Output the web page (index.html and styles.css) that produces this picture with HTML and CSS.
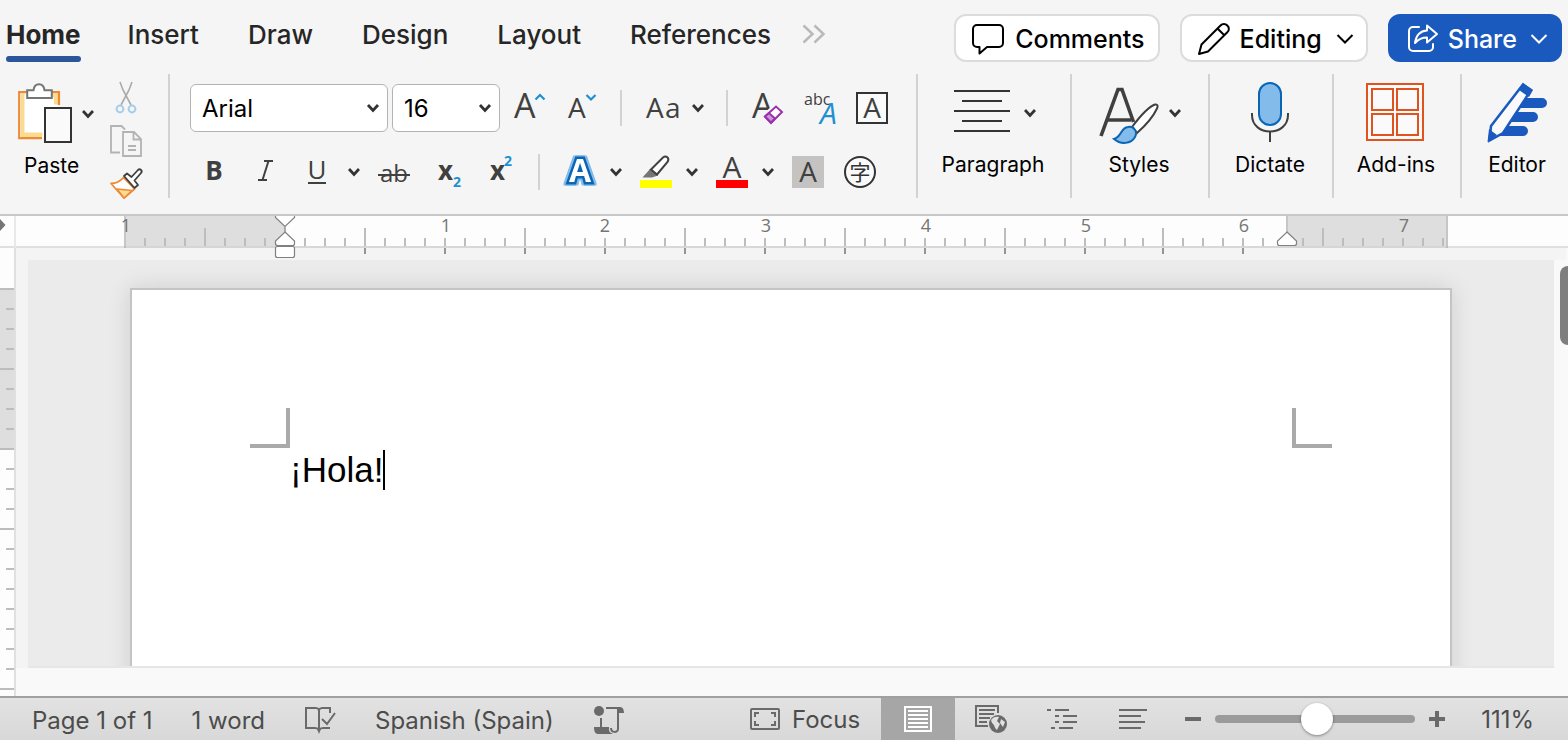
FILE: index.html
```html
<!DOCTYPE html>
<html lang="en">
<head>
<meta charset="utf-8">
<title>Document</title>
<link rel="stylesheet" href="styles.css">
</head>
<body>
<svg class="defs" aria-hidden="true">
  <symbol id="chev" viewBox="0 0 12 10"><path d="M1 2l5 5.500 5-5.500" fill="none" stroke="currentColor" stroke-width="2.800"/></symbol>
  <symbol id="chev-thin" viewBox="0 0 18 12"><path d="M1.500 2L9 9.500 16.500 2" fill="none" stroke="currentColor" stroke-width="2"/></symbol>
</svg>

<header class="top">
  <nav class="tabs">
    <a class="tab active" href="#home">Home</a>
    <a class="tab" href="#insert">Insert</a>
    <a class="tab" href="#draw">Draw</a>
    <a class="tab" href="#design">Design</a>
    <a class="tab" href="#layout">Layout</a>
    <a class="tab" href="#references">References</a>
    <button class="plain more" aria-label="More tabs"><svg width="24" height="20" viewBox="0 0 24 20" fill="none" stroke="#b9b9b9" stroke-width="2.500"><path d="M1.500 1.500L10.500 10l-9 8.500M12.500 1.500L21.500 10l-9 8.500"/></svg></button>
  </nav>
  <div class="actions">
    <button class="pill"><svg width="32" height="32" viewBox="0 0 32 32" fill="none" stroke="#000" stroke-width="2" stroke-linejoin="round"><path d="M5 2h22a4 4 0 0 1 4 4v14a4 4 0 0 1-4 4H15l-7.500 6.500V24H5a4 4 0 0 1-4-4V6a4 4 0 0 1 4-4z"/></svg>Comments</button>
    <button class="pill editing"><svg width="32" height="32" viewBox="0 0 32 32" fill="none" stroke="#000" stroke-width="2" stroke-linejoin="round"><path d="M1 31l2.500-9.500L22.500 2.500a4.500 4.500 0 0 1 6.800 0 4.500 4.500 0 0 1 0 6.800L10 28.500zM19.500 5.500l6.800 6.800"/></svg>Editing<svg class="end" width="18" height="12"><use href="#chev-thin"/></svg></button>
    <button class="pill share"><svg width="32" height="30" viewBox="0 0 32 30" fill="none" stroke="#fff" stroke-width="2" stroke-linejoin="round"><path d="M12 3H6a4 4 0 0 0-4 4v16a4 4 0 0 0 4 4h16a4 4 0 0 0 4-4v-3" stroke-linecap="round"/><path d="M20 1.500l10 8.500-10 8.500v-5c-5 0-8.500 1.500-12 5.500 1-7 4.500-12 12-12.500z"/></svg>Share<svg class="end" width="18" height="12"><use href="#chev-thin"/></svg></button>
  </div>
</header>

<section class="ribbon" aria-label="Home">
  <div class="group paste-group">
    <button class="plain big">
      <span class="art">
        <svg width="56" height="62" viewBox="0 0 56 62"><path d="M42 22V10H1v46h24" fill="#fff" stroke="none"/><path d="M3.500 11v42.500H24V50H6V11zM33 11h7v10h-3.500v-7H33z" fill="#fadb8f" stroke="#fadb8f"/><path d="M24 55.200H1.200V9.200H41V22" fill="none" stroke="#ee8a33" stroke-width="2.200"/><path d="M9.200 15V7.200h6.300C16 3 18 1.200 21 1.200s5 1.800 5.500 6h7.300V15z" fill="#fff" stroke="#757575" stroke-width="2"/><rect x="27" y="25" width="26" height="34" fill="#fafafa" stroke="#333" stroke-width="2"/></svg>
        <svg class="chev" width="12" height="10"><use href="#chev"/></svg>
      </span>
      <span>Paste</span>
    </button>
    <div class="clip">
      <button class="plain" aria-label="Cut"><svg width="32" height="34" viewBox="0 0 32 34" fill="none"><path d="M10 1l3 8 8 15M22 1l-3 8-8 15" stroke="#aaa" stroke-width="1.600"/><circle cx="10" cy="28" r="3.400" stroke="#a3cdea" stroke-width="2"/><circle cx="22" cy="28" r="3.400" stroke="#a3cdea" stroke-width="2"/></svg></button>
      <button class="plain" aria-label="Copy"><svg width="32" height="34" viewBox="0 0 32 34" fill="none" stroke="#b3b3b3" stroke-width="1.800"><path d="M10 28.500H1V2h10.500L15 5.500M13 8h11l7 7v17H13zM23.500 8v7.500H31M18 22h8M18 26h8"/></svg></button>
      <button class="plain" aria-label="Format painter"><svg width="32" height="34" viewBox="0 0 32 34" stroke-linejoin="round" stroke-width="1.800"><path d="M1 16.500c6 0 9-2 12.500-6L24.500 22 14 31z" fill="#fff" stroke="#ee8a33"/><path d="M7 22l15 1.500-8 7.500z" fill="#fadb8f" stroke="#ee8a33" stroke-width="1.500"/><path d="M14 9l3-2.500 4.500 3.500L28 3a2 2 0 0 1 3 3l-6.500 7.500L28 18l-3.500 3z" fill="#fff" stroke="#404040"/></svg></button>
    </div>
  </div>

  <div class="group font-group">
    <div class="row row-a">
      <label class="combo"><select aria-label="Font"><option>Arial</option></select><svg class="chev" width="14" height="10"><use href="#chev"/></svg></label>
      <label class="combo size"><select aria-label="Font size"><option>16</option></select><svg class="chev" width="14" height="10"><use href="#chev"/></svg></label>
      <button class="plain" aria-label="Grow font"><svg width="32" height="36" viewBox="0 0 32 36"><text x="0" y="28" class="g s34">A</text><path d="M21.500 9.500l4.500-4.500 4.500 4.500" fill="none" stroke="#1e90d2" stroke-width="2.200"/></svg></button>
      <button class="plain" aria-label="Shrink font"><svg width="32" height="36" viewBox="0 0 32 36"><text x="2" y="28" class="g s28">A</text><path d="M20.500 5l4.500 4.500L29.500 5" fill="none" stroke="#1e90d2" stroke-width="2.200"/></svg></button>
      <i class="bar"></i>
      <button class="plain" aria-label="Change case"><svg width="36" height="36" viewBox="0 0 36 36"><text x="0" y="28" class="g s28">A</text><text x="19" y="28" class="g s28">a</text></svg></button>
      <button class="plain arrow" aria-label="Change case options"><svg class="chev" width="12" height="10"><use href="#chev"/></svg></button>
      <i class="bar"></i>
      <button class="plain" aria-label="Clear formatting"><svg width="32" height="36" viewBox="0 0 32 36"><text x="0" y="28" class="g s34">A</text><path d="M12 26L24 15l7 6.500-12 12z" fill="#f5f5f5" stroke="#f5f5f5" stroke-width="4"/><path d="M13 26.500L24 16.500l6 5.500-11 11z" fill="#fff" stroke="#9b2fae" stroke-width="2"/><path d="M13 26.500l4-3.500 6 5.500-4 4z" fill="#c99ad6" stroke="#9b2fae" stroke-width="2"/></svg></button>
      <button class="plain" aria-label="Phonetic guide"><svg width="36" height="36" viewBox="0 0 36 36"><text x="0" y="15" class="g s16">abc</text><text x="16" y="34" class="g s30 blue it">A</text></svg></button>
      <button class="plain" aria-label="Character border"><svg width="32" height="36" viewBox="0 0 32 36"><rect x="1" y="3" width="30" height="30" fill="#fafafa" stroke="#333" stroke-width="2"/><text x="16" y="28" class="g s28 mid">A</text></svg></button>
    </div>
    <div class="row row-b">
      <button class="plain" aria-label="Bold"><svg width="32" height="36" viewBox="0 0 32 36"><text x="16" y="26" class="g s26 mid bold">B</text></svg></button>
      <button class="plain" aria-label="Italic"><svg width="32" height="36" viewBox="0 0 32 36"><path d="M14 7h9M8 26h9M18.500 7l-6 19" fill="none" stroke="#404040" stroke-width="2"/></svg></button>
      <button class="plain" aria-label="Underline"><svg width="32" height="36" viewBox="0 0 32 36"><text x="17" y="25" class="g s26 mid">U</text><path d="M8 29h18" stroke="#404040" stroke-width="2"/></svg></button>
      <button class="plain arrow" aria-label="Underline options"><svg class="chev" width="12" height="10"><use href="#chev"/></svg></button>
      <button class="plain" aria-label="Strikethrough"><svg width="32" height="36" viewBox="0 0 32 36"><text x="16" y="28" class="g s24 mid">ab</text><path d="M0 21h32" stroke="#404040" stroke-width="2"/></svg></button>
      <button class="plain" aria-label="Subscript"><svg width="32" height="36" viewBox="0 0 32 36"><text x="4" y="26" class="g s26 bold">x</text><text x="19" y="33" class="g s14 blue bold">2</text></svg></button>
      <button class="plain" aria-label="Superscript"><svg width="32" height="36" viewBox="0 0 32 36"><text x="4" y="26" class="g s26 bold">x</text><text x="18" y="12" class="g s14 blue bold">2</text></svg></button>
      <i class="bar"></i>
      <button class="plain" aria-label="Text effects"><svg width="32" height="36" viewBox="0 0 32 36"><text x="16" y="28" class="fx">A</text></svg></button>
      <button class="plain arrow" aria-label="Text effect options"><svg class="chev" width="12" height="10"><use href="#chev"/></svg></button>
      <button class="plain" aria-label="Highlight"><svg width="32" height="36" viewBox="0 0 32 36"><path d="M0 26h32v8H0z" fill="#ff0"/><path d="M2.500 23.500L10 15l8 6.500-6 2z" fill="#757575"/><path d="M11 15.500L23 3.500c3-2.500 7 .5 4.500 4.500L17 20.500z" fill="#fff" stroke="#404040" stroke-width="2"/></svg></button>
      <button class="plain arrow" aria-label="Highlight options"><svg class="chev" width="12" height="10"><use href="#chev"/></svg></button>
      <button class="plain" aria-label="Font color"><svg width="32" height="36" viewBox="0 0 32 36"><path d="M0 26h32v8H0z" fill="red"/><text x="16" y="24" class="g s30 mid">A</text></svg></button>
      <button class="plain arrow" aria-label="Font color options"><svg class="chev" width="12" height="10"><use href="#chev"/></svg></button>
      <button class="plain" aria-label="Character shading"><svg width="32" height="36" viewBox="0 0 32 36"><path d="M0 2h32v32H0z" fill="#c4c3c2"/><text x="16" y="28" class="g s28 mid">A</text></svg></button>
      <button class="plain" aria-label="Enclose characters"><svg width="32" height="36" viewBox="0 0 32 36"><circle cx="16" cy="18" r="15" fill="#fafafa" stroke="#333" stroke-width="2"/><text x="16" y="26" class="cjk">字</text></svg></button>
    </div>
  </div>

  <div class="group paragraph">
    <button class="plain big"><span class="art"><svg width="56" height="62" viewBox="0 0 56 62"><path d="M0 9h56M8 19h40M0 29h56M8 39h40M0 49h56" stroke="#333" stroke-width="2"/></svg><svg class="chev" width="12" height="10"><use href="#chev"/></svg></span><span>Paragraph</span></button>
  </div>
  <div class="group styles">
    <button class="plain big"><span class="art"><svg width="60" height="62" viewBox="0 0 60 62"><path d="M2 54L19 7.500h4L34.500 40M8 38h24" fill="none" stroke="#404040" stroke-width="3.600"/><path d="M33 45C42 33 49 25 56 22.500c3-.5 3 2 2 4C54 35 46 44 38 51z" fill="#fff" stroke="#404040" stroke-width="2"/><path d="M15 57c8-2 6-11 14-12 6-1 10 5 7 10-4 7-14 8-21 2z" fill="#83bceb" stroke="#0a66b5" stroke-width="2"/></svg><svg class="chev" width="12" height="10"><use href="#chev"/></svg></span><span>Styles</span></button>
  </div>
  <div class="group dictate">
    <button class="plain big"><span class="art"><svg width="40" height="62" viewBox="0 0 40 62"><rect x="9" y="1" width="22" height="42" rx="11" fill="#83bceb" stroke="#0a66b5" stroke-width="2"/><path d="M2 31v2c0 22 36 22 36 0v-2M20 49v11" fill="none" stroke="#404040" stroke-width="2"/></svg></span><span>Dictate</span></button>
  </div>
  <div class="group addins">
    <button class="plain big"><span class="art"><svg width="60" height="62" viewBox="0 0 60 62" fill="#fafafa" stroke="#e0531f" stroke-width="2"><rect x="1" y="2" width="56" height="56"/><rect x="6" y="7" width="21" height="21"/><rect x="31" y="7" width="21" height="21"/><rect x="6" y="32" width="21" height="21"/><rect x="31" y="32" width="21" height="21"/></svg></span><span>Add-ins</span></button>
  </div>
  <div class="group editor">
    <button class="plain big"><span class="art"><svg width="62" height="62" viewBox="0 0 62 62"><path d="M37 16h19a5 5 0 0 1 0 10H28zM30 30h17a5 5 0 0 1 0 10H22zM20 44h17a5 5 0 0 1 0 10H9z" fill="#1a5abf"/><path d="M37 2.500l8 5.500-28 43L3.500 58.500 5 44z" fill="#fafafa" stroke="#1a5abf" stroke-width="2.500"/><path d="M37 1l10 7-4 7-10-7zM3 47l8 6-9.500 7z" fill="#1a5abf"/></svg></span><span>Editor</span></button>
  </div>
</section>

<div class="hruler" aria-hidden="true">
  <svg class="corner" width="16" height="32" viewBox="0 0 16 32"><path d="M0 3l5.500 6L0 15z" fill="#757575"/><path d="M15 0v32" stroke="#e8e8e8" stroke-width="2"/></svg>
  <svg class="scale" width="1324" height="44" viewBox="124 216 1324 44">
    <path d="M124 216h161v32H124zM1287 216h161v32h-161z" fill="#dedede"/>
    <path d="M125 216v32M1287 216v24M1447 216v32" stroke="#c6c6c6" stroke-width="2"/>
    <path d="M124 247h1324" stroke="#000" stroke-opacity=".04" stroke-width="2"/>
    <path d="M144 242h986" stroke="#bdbdbd" stroke-width="8" stroke-dasharray="2 18"/>
    <path d="M1142 242h303" stroke="#bdbdbd" stroke-width="8" stroke-dasharray="2 18"/>
    <path d="M205 228v18M365 228v18M525 228v18M685 228v18M845 228v18M1005 228v18M1163 228v18M1323 228v18" stroke="#bdbdbd" stroke-width="2"/>
    <path d="M364 251h722" stroke="#949494" stroke-width="6" stroke-dasharray="2 78"/>
    <path d="M1162 251h82" stroke="#949494" stroke-width="6" stroke-dasharray="2 78"/>
    <g class="nums"><text x="126" y="232">1</text><text x="446" y="232">1</text><text x="605" y="232">2</text><text x="766" y="232">3</text><text x="926" y="232">4</text><text x="1086" y="232">5</text><text x="1244" y="232">6</text><text x="1404" y="232">7</text></g>
    <g fill="#fff" stroke="#808080" stroke-width="1.200"><path d="M275.500 216v1.500l9.500 9 9.500-9V216M285 226v6"/><path id="stop" d="M285 232l9.500 9v2.500a2 2 0 0 1-2 2h-15a2 2 0 0 1-2-2V241z"/><use href="#stop" x="1002"/><rect x="275.500" y="246.500" width="19" height="11" rx="2"/></g>
  </svg>
</div>

<main class="work">
  <svg class="vruler" width="16" height="448" viewBox="0 248 16 448" aria-hidden="true">
    <path d="M0 248h14v448H0z" fill="#fdfdfd"/><path d="M0 288h14v160H0z" fill="#dedede"/>
    <path d="M10 308v388" stroke="#bdbdbd" stroke-width="8" stroke-dasharray="2 18"/>
    <path d="M0 289h14M0 369h14M0 449h14M0 529h14M0 689h14" stroke="#bdbdbd" stroke-width="2"/>
    <path d="M15 248v448" stroke="#e0e0e0" stroke-width="2"/>
  </svg>
  <div class="canvas">
    <article class="page">
      <div class="body"><span class="mark left"></span><span class="mark right"></span><p contenteditable="true" role="textbox" aria-label="Document text">¡Hola!</p><span class="caret"></span></div>
    </article>
  </div>
  <div class="scroll"><div class="thumb"></div></div>
</main>

<footer class="status">
  <div class="left-side">
    <span class="pages">Page 1 of 1</span>
    <span class="words">1 word</span>
    <button class="plain" aria-label="Proofing"><svg width="32" height="30" viewBox="0 0 32 30" fill="none" stroke="#6a6a6a" stroke-width="2"><path d="M15 25V5c-1-2-2-2-3-2H2v20h9c2 0 3 0 4 2zM15 5c1-2 2-2 3-2h8v5M15 25c1-2 2-2 4-2h7M18 14l5 5 8-11"/><path d="M13 24h4l-2 5z" fill="#6a6a6a" stroke="none"/></svg></button>
    <button class="plain lang">Spanish (Spain)</button>
    <button class="plain" aria-label="Accessibility"><svg width="32" height="30" viewBox="0 0 32 30"><circle cx="6" cy="6" r="5" fill="#6a6a6a"/><path d="M8 13v10M13 3h12v21c0 4-7 4-7-1" fill="none" stroke="#6a6a6a" stroke-width="2"/><path d="M1 22h15v3c0 2 2 3 4 4H5c-3 0-4-3-4-7zM23 2h4c3 0 4 3 4 6h-5z" fill="#6a6a6a"/></svg></button>
  </div>
  <div class="right-side">
    <button class="plain focus"><svg width="30" height="24" viewBox="0 0 30 24" fill="none" stroke="#6a6a6a" stroke-width="2"><rect x="1" y="2" width="28" height="20" rx="1"/><path d="M5 10V6h4M21 6h4v4M25 14v4h-4M9 18H5v-4"/></svg>Focus</button>
    <button class="view on" aria-label="Print layout"><svg width="28" height="28" viewBox="0 0 28 28"><rect x="1" y="2" width="26" height="24" fill="none" stroke="#fff" stroke-width="2"/><path d="M4 6h20M4 10h20M4 14h20M4 18h20M4 22h20" stroke="#fff" stroke-width="2"/></svg></button>
    <button class="view" aria-label="Web layout"><svg width="32" height="30" viewBox="0 0 32 30"><path d="M23 9V2H1v20h12M4 6h16M4 10h15M4 14h11M4 18h8" fill="none" stroke="#6a6a6a" stroke-width="2"/><circle cx="23" cy="20" r="9" fill="#6a6a6a"/><path d="M16 16c2-3 5-4 8-3l-2 4 3 3-3 6c-3-2-2-5-5-7zM26 15l4 3-2 5-3-4z" fill="#e0e0e0"/></svg></button>
    <button class="view" aria-label="Outline"><svg width="30" height="24" viewBox="0 0 30 24" stroke="#6a6a6a" stroke-width="2"><path d="M0 3h4M8 3h14M8 9h4M16 9h14M8 15h4M16 15h14M4 21h4M12 21h14"/></svg></button>
    <button class="view draft" aria-label="Draft"><svg width="28" height="24" viewBox="0 0 28 24" stroke="#6a6a6a" stroke-width="2"><path d="M0 3h28M0 9h22M0 15h26M0 21h22"/></svg></button>
    <button class="plain" aria-label="Zoom out"><svg width="16" height="16" viewBox="0 0 16 16"><path d="M0 8h16" stroke="#6a6a6a" stroke-width="4"/></svg></button>
    <input type="range" aria-label="Zoom" min="0" max="100" value="51">
    <button class="plain" aria-label="Zoom in"><svg width="16" height="16" viewBox="0 0 16 16"><path d="M0 8h16M8 0v16" stroke="#6a6a6a" stroke-width="4"/></svg></button>
    <span class="percent">111%</span>
  </div>
</footer>
</body>
</html>
```

FILE: styles.css
```css
* { box-sizing: border-box; }
body {
  margin: 0;
  height: 100vh;
  display: flex;
  flex-direction: column;
  overflow: hidden;
  background: #f5f5f5;
  color: #000;
  font-family: Inter, "Liberation Sans", sans-serif;
}
svg { display: block; flex: none; overflow: visible; }
.defs { position: absolute; width: 0; height: 0; }
button, select { font: inherit; color: inherit; }
.plain { border: 0; padding: 0; background: none; white-space: nowrap; }
.chev { color: #333; }

/* Tabs and actions */
.top { flex: none; display: flex; justify-content: space-between; padding: 14px 6px 0; }
.tabs { display: flex; gap: 49px; align-items: flex-start; }
.tab { color: #262626; font-size: 26px; line-height: 42px; height: 48px; font-weight: 500; text-decoration: none; }
.tab.active { font-weight: 700; margin-right: -2px; }
.tab.active::after { content: ""; display: block; height: 6px; border-radius: 3px; background: #2b579a; }
.more { padding-top: 10px; margin-left: -18px; }
.actions { display: flex; gap: 20px; }
.pill {
  display: flex; align-items: center; gap: 11px;
  height: 48px; padding: 2px 13px 0 16px;
  border: 2px solid #dcdcdc; border-radius: 12px;
  background: #fff; font-size: 25px; font-weight: 500; white-space: nowrap;
}
.editing { padding: 2px 12px 0 16px; gap: 10px; }
.share { background: #1a5abf; border-color: #1a5abf; color: #fff; padding: 2px 12px 0 17px; gap: 9px; }
.end { margin-left: 4px; }

/* Ribbon */
.ribbon { flex: none; display: flex; padding: 12px 0 16px; border-bottom: 2px solid #c8c8c8; }
.group { flex: none; height: 124px; border-left: 2px solid #d2d2d2; display: flex; justify-content: center; padding-right: 2px; }
.paste-group { width: 168px; border-left: 0; justify-content: flex-start; gap: 16px; padding-left: 18px; }
.font-group { flex: 1; min-width: 0; display: block; padding: 10px 0 0 20px; }
.paragraph { width: 154px; }
.styles { width: 138px; }
.dictate { width: 124px; }
.addins { width: 128px; }
.editor { width: 108px; padding-left: 6px; }
.big { display: flex; flex-direction: column; align-items: center; font-size: 21px; line-height: 26px; padding-top: 8px; align-self: flex-start; }
.art { display: flex; align-items: center; gap: 14px; height: 62px; margin-bottom: 8px; }
.paragraph .art { padding-left: 4px; }
.styles .art { gap: 10px; padding-left: 2px; }
.paste-group .big { align-items: flex-start; padding-top: 9px; }
.paste-group .art { gap: 8px; }
.paste-group .big > span:last-child { padding-left: 6px; }
.clip { display: flex; flex-direction: column; gap: 9px; padding-top: 7px; }
.row { display: grid; align-items: center; justify-items: start; height: 48px; }
.row-a { grid-template-columns: 202px 122px 52px 54px 26px 42px 38px 26px 52px 52px 32px; }
.row-b { height: 36px; margin-top: 22px; padding-left: 8px; grid-template-columns: 52px 50px 44px 34px 56px 52px 52px 26px 42px 34px 42px 34px 42px 34px 52px 32px; }
.bar { width: 2px; height: 36px; background: #d2d2d2; }
.arrow { padding: 0 4px; }
.combo { display: flex; align-items: center; position: relative; width: 198px; height: 48px; }
.combo.size { width: 108px; }
.combo select { appearance: none; width: 100%; height: 48px; padding: 0 30px 0 11px; border: 1px solid #b4b4b4; border-radius: 6px; background: #fff; font-size: 24px; }
.combo .chev { position: absolute; right: 8px; }
.g { font-family: "Open Sans", "Noto Sans", sans-serif; fill: #404040; }
.s34 { font-size: 34px; } .s30 { font-size: 30px; } .s28 { font-size: 28px; } .s26 { font-size: 26px; }
.s24 { font-size: 24px; } .s16 { font-size: 16px; } .s14 { font-size: 14px; }
.mid { text-anchor: middle; }
.bold { font-weight: 700; }
.it { font-style: italic; }
.blue { fill: #1e90d2; }
.fx {
  font: 700 32px "Open Sans", sans-serif; text-anchor: middle; fill: #fff;
  stroke: #0a66b5; stroke-width: 5px; paint-order: stroke;
  filter: drop-shadow(2px 0 0 #83bceb) drop-shadow(-2px 0 0 #83bceb) drop-shadow(0 1px 0 #83bceb) drop-shadow(0 -1px 0 #83bceb);
}
.cjk { font: 21px "Noto Sans CJK JP", sans-serif; text-anchor: middle; fill: #333; }

/* Horizontal ruler */
.hruler { flex: none; display: flex; height: 32px; background: #fdfdfd; border-bottom: 2px solid #e0e0e0; position: relative; z-index: 1; justify-content: center; padding: 0 12px 0 16px; }
.corner { position: absolute; left: 0; top: 0; }
.nums { font: 18px "Open Sans", sans-serif; fill: #757575; text-anchor: middle; }

/* Document area */
.work { flex: 1; min-height: 0; display: flex; overflow: hidden; background: #f9f9f9; border-bottom: 2px solid #a0a0a0; }
.canvas {
  flex: 1; min-width: 0; display: flex; justify-content: center;
  margin: 12px 0 28px 12px; padding-top: 28px; overflow: hidden;
  background: #ebebeb; border-bottom: 2px solid #e6e6e6;
  outline: 12px solid #f4f4f4; clip-path: inset(-12px -14px 0 -12px);
}
.page { width: 1322px; height: 1200px; flex: none; background: #fff; border: 2px solid #c4c4c4; padding: 158px 158px 0; box-shadow: 0 0 22px rgba(0, 0, 0, .12); }
.body { position: relative; display: flex; align-items: center; height: 44px; }
.body p { margin: 0; font: 35px/42px "Liberation Sans", Arial, sans-serif; outline: 0; }
.caret { width: 2px; height: 40px; background: #000; }
.mark { position: absolute; top: -40px; width: 40px; height: 40px; border-bottom: 4px solid #aaa; }
.mark.left { left: -40px; border-right: 4px solid #aaa; }
.mark.right { right: -40px; border-left: 4px solid #aaa; }
.scroll { width: 14px; margin-top: 12px; padding: 6px 0 0 6px; background: #f9f9f9; position: relative; }
.thumb { width: 16px; height: 79px; border-radius: 8px; background: #7e7e7e; }

/* Status bar */
.status { flex: none; height: 42px; display: flex; justify-content: space-between; background: linear-gradient(#e2e2e2, #d8d8d8); color: #4c4c4c; font-size: 24px; white-space: nowrap; }
.left-side, .right-side { display: flex; align-items: center; }
.left-side { padding: 2px 0 0 32px; gap: 39px; }
.right-side { padding-right: 34px; }
.focus { display: flex; align-items: center; gap: 12px; margin-right: 21px; }
.view { border: 0; background: none; height: 42px; padding: 0 20px; display: flex; align-items: center; }
.view.on { width: 74px; padding: 0; justify-content: center; background: #a6a6a6; }
.view.draft { padding: 0 24px 0 22px; }
.right-side > .plain:not(.focus) { margin: 0 14px; }
input[type="range"] { appearance: none; width: 200px; height: 32px; margin: 0; background: none; }
input[type="range"]::-webkit-slider-runnable-track { height: 8px; border-radius: 4px; background: #9b9b9b; }
input[type="range"]::-webkit-slider-thumb { appearance: none; width: 32px; height: 32px; margin-top: -12px; border-radius: 16px; background: #fff; box-shadow: 0 1px 3px rgba(0, 0, 0, .4); }
.percent { margin-left: 22px; }
```
